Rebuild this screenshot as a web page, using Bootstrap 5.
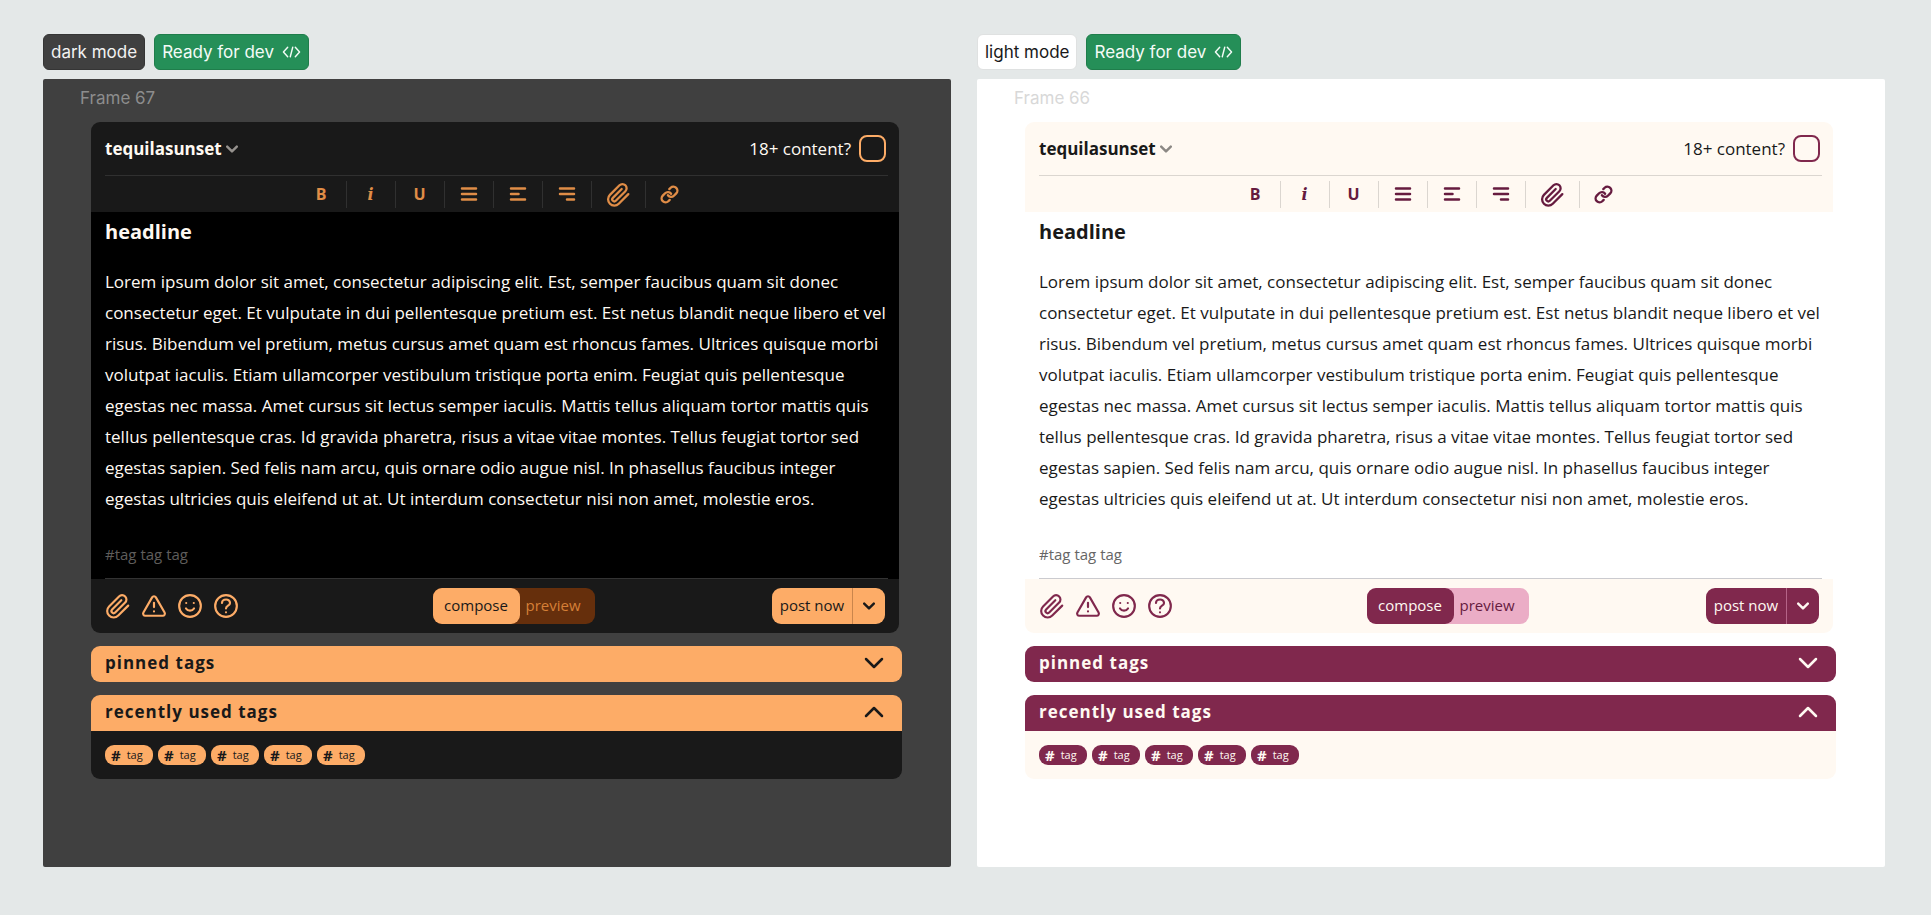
<!DOCTYPE html>
<html lang="en">
<head>
<meta charset="utf-8">
<meta name="viewport" content="width=device-width, initial-scale=1">
<title>Post editor – dark and light mode</title>
<link href="https://cdn.jsdelivr.net/npm/bootstrap@5.3.0/dist/css/bootstrap.min.css" rel="stylesheet">
<style>
  body {
    background: #e4e8e8;
    font-family: "Open Sans", "Noto Sans", sans-serif;
    font-size: 17px;
  }
  .modes { padding: 34px 46px 48px 43px; gap: 26px; }
  .pane { flex: 1 1 0; min-width: 0; }

  /* themes */
  .theme-dark {
    --board: #404040; --chip-line: #353535; --chip-text: #f2f2f2; --label: #8d8d8d;
    --card: #191919; --sheet: #000; --text: #fff9f2; --muted: #5f5d5b;
    --line: #303030; --sheet-line: #333; --tool: #e08d47;
    --accent: #fdac67; --on-accent: #191919; --split: #c9854c;
    --off: #662f0c; --on-off: #d57f37; --caret: #96928e;
  }
  .theme-light {
    --board: #fff; --chip-line: #dfe1e1; --chip-text: #191919; --label: #d8d8d8;
    --card: #fff9f2; --sheet: #fff; --text: #191919; --muted: #666;
    --line: #dbd6d0; --sheet-line: #cbcbcf; --tool: #661b3f;
    --accent: #80284d; --on-accent: #fff9f2; --split: #b56488;
    --off: #ebadc6; --on-off: #661b3f; --caret: #8b8884;
  }

  button { font: inherit; color: inherit; background: none; border: 0; padding: 0; }
  svg { display: block; fill: none; stroke: currentColor; stroke-linecap: round; stroke-linejoin: round; }

  /* labels above each board */
  .mode-chip, .dev-chip, .frame-label { font-family: Inter, sans-serif; line-height: 24px; }
  .mode-chip, .dev-chip { height: 36px; padding: 0 7px; border: 1px solid; border-radius: 6px; }
  .mode-chip { background: var(--board); border-color: var(--chip-line); color: var(--chip-text); }
  .dev-chip { background: #258f58; border-color: #1f7d4b; color: #f4fbf7; }
  .chips { gap: 9px; margin-bottom: 9px; }

  .board { background: var(--board); color: var(--text); padding: 7px 49px 0 48px; border-radius: 2px; }
  .frame-label { color: var(--label); margin: 0 0 12px -11px; }

  .editor { background: var(--card); border-radius: 9px; margin: 0 3px 13px 0; }
  .editor-head { height: 53px; padding: 0 13px 0 14px; }
  .editor-tools { height: 36px; }
  .rule { height: 1px; margin: 0 11px 0 14px; background: var(--line); }
  .check-adult {
    appearance: none; width: 27px; height: 27px; margin: 0;
    border: 2px solid var(--accent); border-radius: 8px;
  }
  .check-adult:checked { background: var(--accent); }

  .tool { width: 49px; height: 27px; color: var(--tool); font-size: 16px; font-weight: 700; line-height: 27px; }
  .tool + .tool { border-left: 1px solid var(--line); }
  .tool-wide { width: 54px; }
  .tool-slab { font-family: "DejaVu Serif", serif; font-style: italic; }

  .sheet { background: var(--sheet); padding: 5px 11px 0 14px; }
  .sheet h2 { font-size: 20px; line-height: 30px; font-weight: 700; margin: 0 0 19px; }
  .sheet p { line-height: 31px; margin: 0 0 28px; }
  .tag-input {
    display: block; width: 100%; height: 24px; padding: 0; border: 0; outline: 0;
    background: none; color: var(--muted); font-size: 15px;
  }
  .sheet-rule { height: 1px; margin-top: 12px; background: var(--sheet-line); }

  .editor-foot { height: 54px; padding: 0 14px; font-size: 15px; }
  .foot-icons { gap: 10px; color: var(--accent); }
  .switch { background: var(--off); color: var(--on-off); border-radius: 9px; }
  .switch button { height: 36px; width: 75px; padding: 0 8px 2px 0; }
  .switch .is-on { width: 87px; padding: 0 0 2px; background: var(--accent); color: var(--on-accent); border-radius: 9px; }
  .post { background: var(--accent); color: var(--on-accent); border-radius: 9px; }
  .post button { height: 36px; }
  .post-now { width: 80px; padding: 0 0 2px; }
  .post-more { width: 33px; border-left: 1px solid var(--split); }

  .tag-bar {
    height: 36px; padding: 0 18px 2px 14px; margin-bottom: 13px;
    background: var(--accent); color: var(--on-accent); border-radius: 9px;
    font-weight: 700; letter-spacing: 1px; line-height: 24px;
  }
  .tag-bar.is-open { margin-bottom: 0; border-radius: 9px 9px 0 0; }
  .tag-list { background: var(--card); padding: 14px; gap: 5px; border-radius: 0 0 9px 9px; }
  .tag {
    width: 48px; height: 20px; padding-left: 6px; gap: 6px; border-radius: 9px;
    background: var(--accent); color: var(--on-accent); font-size: 11px; line-height: 20px;
  }
  .tag b { font-size: 15px; line-height: 20px; }
</style>
</head>
<body>

<!-- icons shared by both boards -->
<svg width="0" height="0" class="position-absolute" aria-hidden="true">
  <symbol id="code" viewBox="0 0 20 14"><path d="M6 2 1.500 7 6 12M14 2l4.500 5L14 12M11.300 2 8.700 12"/></symbol>
  <symbol id="lines" viewBox="0 0 18 16"><path d="M2 2.500h14M2 8h14M2 13.500h14"/></symbol>
  <symbol id="lines-left" viewBox="0 0 18 16"><path d="M2 2.500h14M2 8h7.500M2 13.500h14"/></symbol>
  <symbol id="lines-right" viewBox="0 0 18 16"><path d="M2 2.500h14M2 8h14M9 13.500h7"/></symbol>
  <symbol id="clip" viewBox="0 0 24 24"><path d="M21.438 11.662l-9.190 9.190a6 6 0 0 1-8.490-8.490l9.190-9.190a4 4 0 0 1 5.660 5.660l-9.200 9.190a2 2 0 0 1-2.830-2.830l8.490-8.480"/></symbol>
  <symbol id="link" viewBox="0 0 24 24"><path d="M10 13a5 5 0 0 0 7.540.540l3-3a5 5 0 0 0-7.070-7.070l-1.720 1.710M14 11a5 5 0 0 0-7.540-.540l-3 3a5 5 0 0 0 7.070 7.070l1.710-1.710"/></symbol>
  <symbol id="warn" viewBox="0 0 24 24"><path d="M20.043 21H3.957c-1.538 0-2.500-1.664-1.734-2.997l8.043-13.988c.769-1.337 2.699-1.337 3.468 0l8.043 13.988C22.543 19.336 21.581 21 20.043 21ZM12 9v4M12 17v.010"/></symbol>
  <symbol id="smile" viewBox="0 0 24 24"><circle cx="12" cy="12" r="10"/><path d="M8.300 14.300q1.200 1.900 3.700 1.900t3.700-1.900M8.500 9.200v.010M15.500 9.200v.010"/></symbol>
  <symbol id="help" viewBox="0 0 24 24"><circle cx="12" cy="12" r="10"/><path d="M8.300 9.200c.2-4.200 7.400-4.300 7.400 0 0 2.700-3.700 2.300-3.700 5M12 17.800v.010"/></symbol>
  <symbol id="down" viewBox="0 0 20 12"><path d="M2 2l8 8 8-8"/></symbol>
  <symbol id="up" viewBox="0 0 20 12"><path d="M2 10l8-8 8 8"/></symbol>
</svg>

<main class="modes d-flex min-vh-100">

  <section class="pane theme-dark d-flex flex-column">
    <div class="chips d-flex">
      <span class="mode-chip d-flex align-items-center">dark mode</span>
      <span class="dev-chip d-flex align-items-center">Ready for dev<svg class="ms-2" width="19" height="14" stroke-width="1.5" aria-hidden="true"><use href="#code"/></svg></span>
    </div>
    <div class="board flex-grow-1">
      <div class="frame-label">Frame 67</div>

      <div class="editor">
        <div class="editor-head d-flex align-items-center justify-content-between">
          <button type="button" class="d-flex align-items-center fw-bold">tequilasunset<svg width="12" height="8" viewBox="0 0 20 12" stroke-width="4" class="ms-1" style="color:var(--caret)" aria-hidden="true"><path d="M2 2l8 8 8-8"/></svg></button>
          <div class="d-flex align-items-center gap-2">
            <label for="adult-dark">18+ content?</label>
            <input type="checkbox" class="check-adult" id="adult-dark">
          </div>
        </div>
        <div class="rule"></div>
        <div class="editor-tools d-flex align-items-center justify-content-center">
          <button type="button" class="tool">B</button>
          <button type="button" class="tool tool-slab">i</button>
          <button type="button" class="tool">U</button>
          <button type="button" class="tool" aria-label="Justify"><svg class="mx-auto" width="18" height="16" stroke-width="2.5"><use href="#lines"/></svg></button>
          <button type="button" class="tool" aria-label="Align left"><svg class="mx-auto" width="18" height="16" stroke-width="2.5"><use href="#lines-left"/></svg></button>
          <button type="button" class="tool" aria-label="Align right"><svg class="mx-auto" width="18" height="16" stroke-width="2.5"><use href="#lines-right"/></svg></button>
          <button type="button" class="tool tool-wide" aria-label="Attach file"><svg class="mx-auto" width="25" height="25" stroke-width="2.2"><use href="#clip"/></svg></button>
          <button type="button" class="tool" aria-label="Insert link"><svg class="mx-auto" width="19" height="19" stroke-width="3"><use href="#link"/></svg></button>
        </div>

        <div class="sheet">
          <h2>headline</h2>
          <p>Lorem ipsum dolor sit amet, consectetur adipiscing elit. Est, semper faucibus quam sit donec consectetur eget. Et vulputate in dui pellentesque pretium est. Est netus blandit neque libero et vel risus. Bibendum vel pretium, metus cursus amet quam est rhoncus fames. Ultrices quisque morbi volutpat iaculis. Etiam ullamcorper vestibulum tristique porta enim. Feugiat quis pellentesque egestas nec massa. Amet cursus sit lectus semper iaculis. Mattis tellus aliquam tortor mattis quis tellus pellentesque cras. Id gravida pharetra, risus a vitae vitae montes. Tellus feugiat tortor sed egestas sapien. Sed felis nam arcu, quis ornare odio augue nisl. In phasellus faucibus integer egestas ultricies quis eleifend ut at. Ut interdum consectetur nisi non amet, molestie eros.</p>
          <input type="text" class="tag-input" value="#tag tag tag" aria-label="Tags">
          <div class="sheet-rule"></div>
        </div>

        <div class="editor-foot d-flex align-items-center justify-content-between">
          <div class="foot-icons d-flex pe-3">
            <button type="button" aria-label="Attach file"><svg width="26" height="26" stroke-width="2"><use href="#clip"/></svg></button>
            <button type="button" aria-label="Content warning"><svg width="26" height="26" stroke-width="2"><use href="#warn"/></svg></button>
            <button type="button" aria-label="Emoji"><svg width="26" height="26" stroke-width="2"><use href="#smile"/></svg></button>
            <button type="button" aria-label="Help"><svg width="26" height="26" stroke-width="2"><use href="#help"/></svg></button>
          </div>
          <div class="switch d-flex">
            <button type="button" class="is-on">compose</button>
            <button type="button">preview</button>
          </div>
          <div class="post d-flex">
            <button type="button" class="post-now">post now</button>
            <button type="button" class="post-more" aria-label="More posting options"><svg class="mx-auto" width="12" height="8" viewBox="0 0 20 12" stroke-width="4"><path d="M2 2l8 8 8-8"/></svg></button>
          </div>
        </div>
      </div>

      <button type="button" class="tag-bar d-flex w-100 align-items-center justify-content-between">pinned tags<svg width="20" height="12" stroke-width="2.5" aria-hidden="true"><use href="#down"/></svg></button>
      <button type="button" class="tag-bar is-open d-flex w-100 align-items-center justify-content-between" aria-expanded="true">recently used tags<svg width="20" height="12" stroke-width="2.5" aria-hidden="true"><use href="#up"/></svg></button>
      <div class="tag-list d-flex">
        <button type="button" class="tag d-flex"><b>#</b><span>tag</span></button>
        <button type="button" class="tag d-flex"><b>#</b><span>tag</span></button>
        <button type="button" class="tag d-flex"><b>#</b><span>tag</span></button>
        <button type="button" class="tag d-flex"><b>#</b><span>tag</span></button>
        <button type="button" class="tag d-flex"><b>#</b><span>tag</span></button>
      </div>
    </div>
  </section>

  <section class="pane theme-light d-flex flex-column">
    <div class="chips d-flex">
      <span class="mode-chip d-flex align-items-center">light mode</span>
      <span class="dev-chip d-flex align-items-center">Ready for dev<svg class="ms-2" width="19" height="14" stroke-width="1.5" aria-hidden="true"><use href="#code"/></svg></span>
    </div>
    <div class="board flex-grow-1">
      <div class="frame-label">Frame 66</div>

      <div class="editor">
        <div class="editor-head d-flex align-items-center justify-content-between">
          <button type="button" class="d-flex align-items-center fw-bold">tequilasunset<svg width="12" height="8" viewBox="0 0 20 12" stroke-width="4" class="ms-1" style="color:var(--caret)" aria-hidden="true"><path d="M2 2l8 8 8-8"/></svg></button>
          <div class="d-flex align-items-center gap-2">
            <label for="adult-light">18+ content?</label>
            <input type="checkbox" class="check-adult" id="adult-light">
          </div>
        </div>
        <div class="rule"></div>
        <div class="editor-tools d-flex align-items-center justify-content-center">
          <button type="button" class="tool">B</button>
          <button type="button" class="tool tool-slab">i</button>
          <button type="button" class="tool">U</button>
          <button type="button" class="tool" aria-label="Justify"><svg class="mx-auto" width="18" height="16" stroke-width="2.5"><use href="#lines"/></svg></button>
          <button type="button" class="tool" aria-label="Align left"><svg class="mx-auto" width="18" height="16" stroke-width="2.5"><use href="#lines-left"/></svg></button>
          <button type="button" class="tool" aria-label="Align right"><svg class="mx-auto" width="18" height="16" stroke-width="2.5"><use href="#lines-right"/></svg></button>
          <button type="button" class="tool tool-wide" aria-label="Attach file"><svg class="mx-auto" width="25" height="25" stroke-width="2.2"><use href="#clip"/></svg></button>
          <button type="button" class="tool" aria-label="Insert link"><svg class="mx-auto" width="19" height="19" stroke-width="3"><use href="#link"/></svg></button>
        </div>

        <div class="sheet">
          <h2>headline</h2>
          <p>Lorem ipsum dolor sit amet, consectetur adipiscing elit. Est, semper faucibus quam sit donec consectetur eget. Et vulputate in dui pellentesque pretium est. Est netus blandit neque libero et vel risus. Bibendum vel pretium, metus cursus amet quam est rhoncus fames. Ultrices quisque morbi volutpat iaculis. Etiam ullamcorper vestibulum tristique porta enim. Feugiat quis pellentesque egestas nec massa. Amet cursus sit lectus semper iaculis. Mattis tellus aliquam tortor mattis quis tellus pellentesque cras. Id gravida pharetra, risus a vitae vitae montes. Tellus feugiat tortor sed egestas sapien. Sed felis nam arcu, quis ornare odio augue nisl. In phasellus faucibus integer egestas ultricies quis eleifend ut at. Ut interdum consectetur nisi non amet, molestie eros.</p>
          <input type="text" class="tag-input" value="#tag tag tag" aria-label="Tags">
          <div class="sheet-rule"></div>
        </div>

        <div class="editor-foot d-flex align-items-center justify-content-between">
          <div class="foot-icons d-flex pe-3">
            <button type="button" aria-label="Attach file"><svg width="26" height="26" stroke-width="2"><use href="#clip"/></svg></button>
            <button type="button" aria-label="Content warning"><svg width="26" height="26" stroke-width="2"><use href="#warn"/></svg></button>
            <button type="button" aria-label="Emoji"><svg width="26" height="26" stroke-width="2"><use href="#smile"/></svg></button>
            <button type="button" aria-label="Help"><svg width="26" height="26" stroke-width="2"><use href="#help"/></svg></button>
          </div>
          <div class="switch d-flex">
            <button type="button" class="is-on">compose</button>
            <button type="button">preview</button>
          </div>
          <div class="post d-flex">
            <button type="button" class="post-now">post now</button>
            <button type="button" class="post-more" aria-label="More posting options"><svg class="mx-auto" width="12" height="8" viewBox="0 0 20 12" stroke-width="4"><path d="M2 2l8 8 8-8"/></svg></button>
          </div>
        </div>
      </div>

      <button type="button" class="tag-bar d-flex w-100 align-items-center justify-content-between">pinned tags<svg width="20" height="12" stroke-width="2.5" aria-hidden="true"><use href="#down"/></svg></button>
      <button type="button" class="tag-bar is-open d-flex w-100 align-items-center justify-content-between" aria-expanded="true">recently used tags<svg width="20" height="12" stroke-width="2.5" aria-hidden="true"><use href="#up"/></svg></button>
      <div class="tag-list d-flex">
        <button type="button" class="tag d-flex"><b>#</b><span>tag</span></button>
        <button type="button" class="tag d-flex"><b>#</b><span>tag</span></button>
        <button type="button" class="tag d-flex"><b>#</b><span>tag</span></button>
        <button type="button" class="tag d-flex"><b>#</b><span>tag</span></button>
        <button type="button" class="tag d-flex"><b>#</b><span>tag</span></button>
      </div>
    </div>
  </section>

</main>
<script src="https://cdn.jsdelivr.net/npm/bootstrap@5.3.0/dist/js/bootstrap.bundle.min.js"></script>
</body>
</html>
